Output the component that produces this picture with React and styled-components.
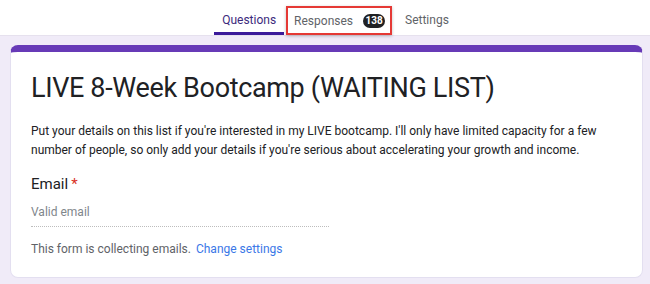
import React from "react";
import styled, { createGlobalStyle } from "styled-components";

const GlobalStyle = createGlobalStyle`
  html, body {
    margin: 0;
    padding: 0;
    background: #f0ebf8;
    font-family: Roboto, "Liberation Sans", Arial, sans-serif;
  }
`;

const Page = styled.div`
  width: 650px;
  height: 284px;
  overflow: hidden;
  background: #f0ebf8;
`;

const TabBar = styled.div`
  display: flex;
  align-items: stretch;
  justify-content: center;
  height: 36px;
  padding-left: 24px;
  background: #fff;
  border-bottom: 1px solid #e6e1ee;
  box-sizing: border-box;
`;

const Tab = styled.div`
  display: flex;
  align-items: center;
  padding: 7px 8px 0;
  margin: 0 ${(p) => (p.$active ? "2px" : "5px")};
  font-size: 12px;
  color: ${(p) => (p.$active ? "#3c2a7c" : "#5f6368")};
  border-bottom: ${(p) => (p.$active ? "3px solid #3b1a9a" : "3px solid transparent")};
  box-sizing: border-box;
`;

const Highlight = styled.div`
  display: flex;
  align-items: center;
  gap: 10px;
  height: 29px;
  margin-top: 6px;
  padding: 0 5px 0 6px;
  border: 2px solid #e53935;
  box-shadow: 0 1px 3px rgba(0, 0, 0, 0.25);
  box-sizing: border-box;
  font-size: 12px;
  color: #5f6368;
`;

const Badge = styled.span`
  display: inline-flex;
  align-items: center;
  justify-content: center;
  min-width: 22px;
  height: 14px;
  padding: 0 2px;
  border-radius: 7px;
  background: #202124;
  color: #fff;
  font-size: 10px;
  font-weight: 700;
  box-sizing: border-box;
`;

const Main = styled.div`
  padding: 9px 7px 0 10px;
`;

const Card = styled.div`
  background: #fff;
  border: 1px solid #e3dff0;
  border-top: 7px solid #673ab7;
  border-radius: 8px;
  padding: 18px 20px 22px 20px;
  height: 233px;
  box-sizing: border-box;
`;

const Title = styled.h1`
  margin: 0;
  font-size: 27px;
  font-weight: 400;
  line-height: 36px;
  letter-spacing: -0.35px;
  color: #202124;
`;

const Description = styled.p`
  margin: 16px 0 0;
  font-size: 12px;
  line-height: 19px;
  color: #202124;
`;

const Question = styled.div`
  margin-top: 14px;
  font-size: 15px;
  line-height: 20px;
  color: #202124;
`;

const Required = styled.span`
  color: #d93025;
  margin-left: 3px;
`;

const Input = styled.div`
  width: 298px;
  margin-top: 10px;
  padding-bottom: 6px;
  border-bottom: 1px dotted #bdbdbd;
  font-size: 12px;
  line-height: 16px;
  color: #80868b;
`;

const Note = styled.div`
  margin-top: 14px;
  font-size: 12px;
  line-height: 16px;
  color: #5f6368;
`;

const NoteLink = styled.span`
  color: #3b78e7;
  margin-left: 5px;
`;

export default function App() {
  return (
    <Page>
      <GlobalStyle />
      <TabBar>
        <Tab $active>Questions</Tab>
        <Highlight>
          Responses
          <Badge>138</Badge>
        </Highlight>
        <Tab>Settings</Tab>
      </TabBar>
      <Main>
        <Card>
          <Title>LIVE 8-Week Bootcamp (WAITING LIST)</Title>
          <Description>
            Put your details on this list if you're interested in my LIVE bootcamp. I'll only have
            limited capacity for a few number of people, so only add your details if you're serious
            about accelerating your growth and income.
          </Description>
          <Question>
            Email<Required>*</Required>
          </Question>
          <Input>Valid email</Input>
          <Note>
            This form is collecting emails.<NoteLink>Change settings</NoteLink>
          </Note>
        </Card>
      </Main>
    </Page>
  );
}
